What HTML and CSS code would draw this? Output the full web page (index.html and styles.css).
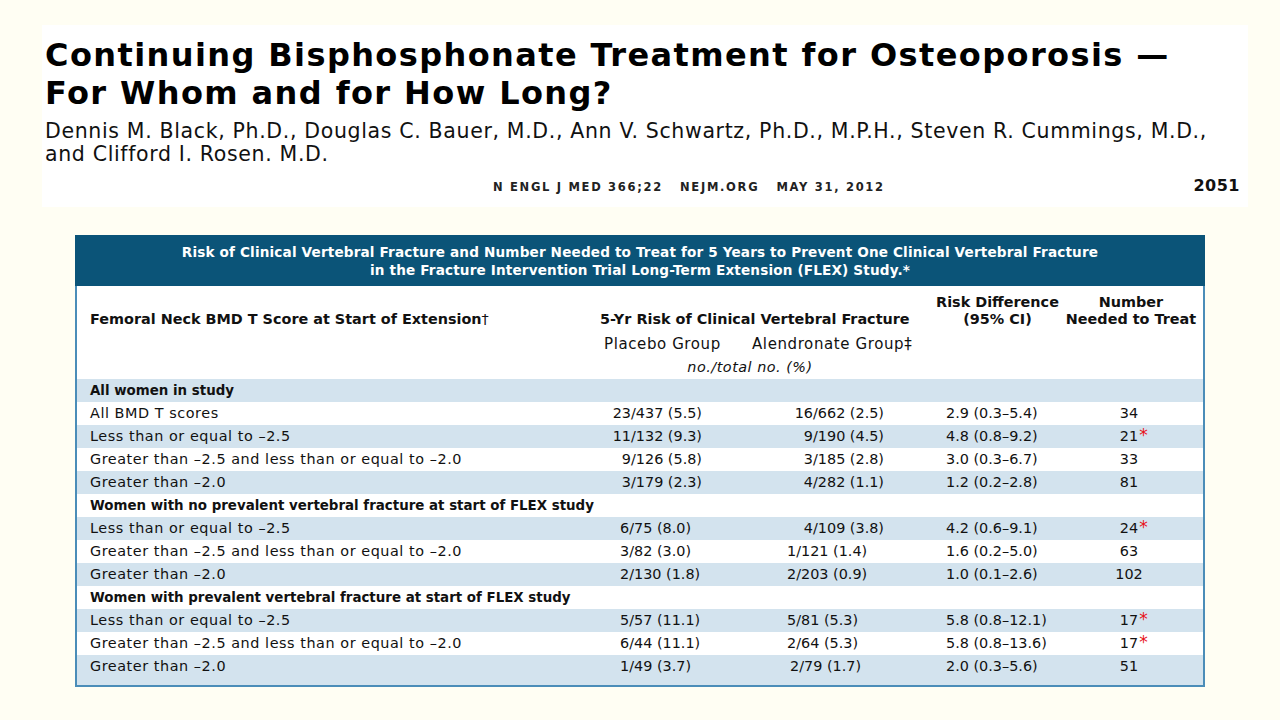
FILE: index.html
```html
<!DOCTYPE html>
<html lang="en">
<head>
<meta charset="utf-8">
<title>Continuing Bisphosphonate Treatment for Osteoporosis</title>
<link rel="stylesheet" href="styles.css">
</head>
<body>
<div class="page">
  <header class="article">
    <h1 class="title">Continuing Bisphosphonate Treatment for Osteoporosis —<br>For Whom and for How Long?</h1>
    <p class="authors">Dennis M. Black, Ph.D., Douglas C. Bauer, M.D., Ann V. Schwartz, Ph.D., M.P.H., Steven R. Cummings, M.D.,<br>and Clifford I. Rosen. M.D.</p>
    <div class="folio">
      <span class="journal">N ENGL J MED 366;22&nbsp;&nbsp;&nbsp;NEJM.ORG&nbsp;&nbsp;&nbsp;MAY 31, 2012</span>
      <span class="pageno">2051</span>
    </div>
  </header>

  <section class="tbl">
    <div class="tbl-title">Risk of Clinical Vertebral Fracture and Number Needed to Treat for 5 Years to Prevent One Clinical Vertebral Fracture<br>in the Fracture Intervention Trial Long-Term Extension (FLEX) Study.*</div>
    <div class="thead">
      <div class="hrow">
        <div class="h1 bottom">Femoral Neck BMD T Score at Start of Extension<span class="dag">†</span></div>
        <div class="h2 bottom">5-Yr Risk of Clinical Vertebral Fracture</div>
        <div class="h4">Risk Difference<br>(95% CI)</div>
        <div class="h5">Number<br>Needed to Treat</div>
      </div>
      <div class="hrow sub">
        <div></div>
        <div class="hp">Placebo Group</div>
        <div class="ha">Alendronate Group‡</div>
        <div></div>
        <div></div>
      </div>
      <div class="hrow unit">
        <div></div>
        <div class="hu">no./total no. (%)</div>
        <div></div>
        <div></div>
      </div>
    </div>

    <div class="row alt sect"><div class="lbl">All women in study</div></div>
    <div class="row"><div class="lbl">All BMD T scores</div><div class="pl r">23/437 (5.5)</div><div class="al r">16/662 (2.5)</div><div class="rd">2.9 (0.3–5.4)</div><div class="nn"><span class="n">34</span></div></div>
    <div class="row alt"><div class="lbl">Less than or equal to –2.5</div><div class="pl r">11/132 (9.3)</div><div class="al r">9/190 (4.5)</div><div class="rd">4.8 (0.8–9.2)</div><div class="nn"><span class="n">21<span class="star">*</span></span></div></div>
    <div class="row"><div class="lbl">Greater than –2.5 and less than or equal to –2.0</div><div class="pl r">9/126 (5.8)</div><div class="al r">3/185 (2.8)</div><div class="rd">3.0 (0.3–6.7)</div><div class="nn"><span class="n">33</span></div></div>
    <div class="row alt"><div class="lbl">Greater than –2.0</div><div class="pl r">3/179 (2.3)</div><div class="al r">4/282 (1.1)</div><div class="rd">1.2 (0.2–2.8)</div><div class="nn"><span class="n">81</span></div></div>
    <div class="row sect"><div class="lbl">Women with no prevalent vertebral fracture at start of FLEX study</div></div>
    <div class="row alt"><div class="lbl">Less than or equal to –2.5</div><div class="pl">6/75 (8.0)</div><div class="al r">4/109 (3.8)</div><div class="rd">4.2 (0.6–9.1)</div><div class="nn"><span class="n">24<span class="star">*</span></span></div></div>
    <div class="row"><div class="lbl">Greater than –2.5 and less than or equal to –2.0</div><div class="pl">3/82 (3.0)</div><div class="al">1/121 (1.4)</div><div class="rd">1.6 (0.2–5.0)</div><div class="nn"><span class="n">63</span></div></div>
    <div class="row alt"><div class="lbl">Greater than –2.0</div><div class="pl">2/130 (1.8)</div><div class="al">2/203 (0.9)</div><div class="rd">1.0 (0.1–2.6)</div><div class="nn"><span class="n">102</span></div></div>
    <div class="row sect"><div class="lbl">Women with prevalent vertebral fracture at start of FLEX study</div></div>
    <div class="row alt"><div class="lbl">Less than or equal to –2.5</div><div class="pl">5/57 (11.1)</div><div class="al">5/81 (5.3)</div><div class="rd">5.8 (0.8–12.1)</div><div class="nn"><span class="n">17<span class="star">*</span></span></div></div>
    <div class="row"><div class="lbl">Greater than –2.5 and less than or equal to –2.0</div><div class="pl">6/44 (11.1)</div><div class="al">2/64 (5.3)</div><div class="rd">5.8 (0.8–13.6)</div><div class="nn"><span class="n">17<span class="star">*</span></span></div></div>
    <div class="row alt last"><div class="lbl">Greater than –2.0</div><div class="pl">1/49 (3.7)</div><div class="al al2">2/79 (1.7)</div><div class="rd">2.0 (0.3–5.6)</div><div class="nn"><span class="n">51</span></div></div>
  </section>
</div>
</body>
</html>
```

FILE: styles.css
```css
html, body {
  margin: 0;
  padding: 0;
}
body {
  background: #fffef3;
  color: #111;
  font-family: "DejaVu Sans", "Open Sans", sans-serif;
  width: 1280px;
  height: 720px;
  overflow: hidden;
}
.page {
  padding-top: 25px;
}
.article {
  margin-left: 42px;
  width: 1206px;
  height: 182px;
  box-sizing: border-box;
  background: #fff;
  padding: 11px 0 0 3px;
}
.title {
  margin: 0;
  font-size: 32px;
  line-height: 38px;
  font-weight: 700;
  color: #000;
  letter-spacing: 1.4px;
}
.authors {
  margin: 8px 0 0;
  font-size: 20.5px;
  line-height: 23px;
  color: #111;
  letter-spacing: 0.65px;
}
.folio {
  display: flex;
  align-items: baseline;
  margin-top: 10px;
}
.journal {
  margin-left: 448px;
  font-size: 11.5px;
  font-weight: 700;
  letter-spacing: 1.7px;
  color: #222;
  white-space: pre;
}
.pageno {
  margin-left: auto;
  margin-right: 8px;
  font-size: 16px;
  font-weight: 700;
  letter-spacing: 0.5px;
}

/* table */
.tbl {
  margin: 28px 0 0 75px;
  width: 1130px;
  box-sizing: border-box;
  border: 2px solid #4b8db8;
  border-top: 0;
  background: #fff;
  font-size: 14.4px;
  color: #111;
}
.tbl-title {
  background: #0b5478;
  color: #fff;
  font-weight: 700;
  text-align: center;
  line-height: 18px;
  padding: 8px 0 7px;
  margin: 0 -2px;
  font-size: 13.6px;
  letter-spacing: 0.15px;
}
.hrow, .row {
  display: grid;
  grid-template-columns: 513px 150px 190px 135px 138px;
}
.thead {
  padding: 8px 0 3px;
  font-weight: 700;
  line-height: 17px;
}
.bottom {
  align-self: end;
}
.h1 {
  padding-left: 13px;
}
.dag {
  font-weight: 400;
}
.h2 {
  grid-column: span 2;
  padding-left: 10px;
  white-space: nowrap;
}
.h4, .h5 {
  text-align: center;
  white-space: nowrap;
}
.h5 {
  padding-right: 6px;
}
.sub {
  margin-top: 7px;
  font-weight: 400;
  line-height: 18px;
  font-size: 15px;
  letter-spacing: 0.6px;
}
.hp {
  padding-left: 14px;
}
.ha {
  padding-left: 12px;
  white-space: nowrap;
}
.unit {
  margin-top: 5px;
  font-weight: 400;
  line-height: 18px;
  grid-template-columns: 513px 340px 135px 138px;
}
.hu {
  font-style: italic;
  text-align: center;
  padding-right: 20px;
  letter-spacing: 0.5px;
}
.row {
  height: 23px;
  line-height: 23px;
}
.row.alt {
  background: #d3e3ee;
}
.row.last {
  height: 30px;
}
.lbl {
  padding-left: 13px;
  white-space: nowrap;
  letter-spacing: 0.55px;
}
.sect .lbl {
  font-weight: 700;
  grid-column: span 5;
  font-size: 13.4px;
  letter-spacing: 0;
}
.pl {
  padding-left: 30px;
}
.pl.r {
  padding-left: 0;
  padding-right: 38px;
  text-align: right;
}
.al {
  padding-left: 47px;
}
.al.r {
  padding-left: 0;
  padding-right: 46px;
  text-align: right;
}
.al.al2 {
  padding-left: 50px;
}
.rd {
  padding-left: 16px;
  white-space: nowrap;
}
.nn {
  text-align: center;
  padding-right: 10px;
}
.n {
  position: relative;
}
.star {
  position: absolute;
  left: 100%;
  top: -4px;
  color: #e8121b;
  font-size: 17px;
  line-height: 23px;
  padding-left: 1px;
}
```
